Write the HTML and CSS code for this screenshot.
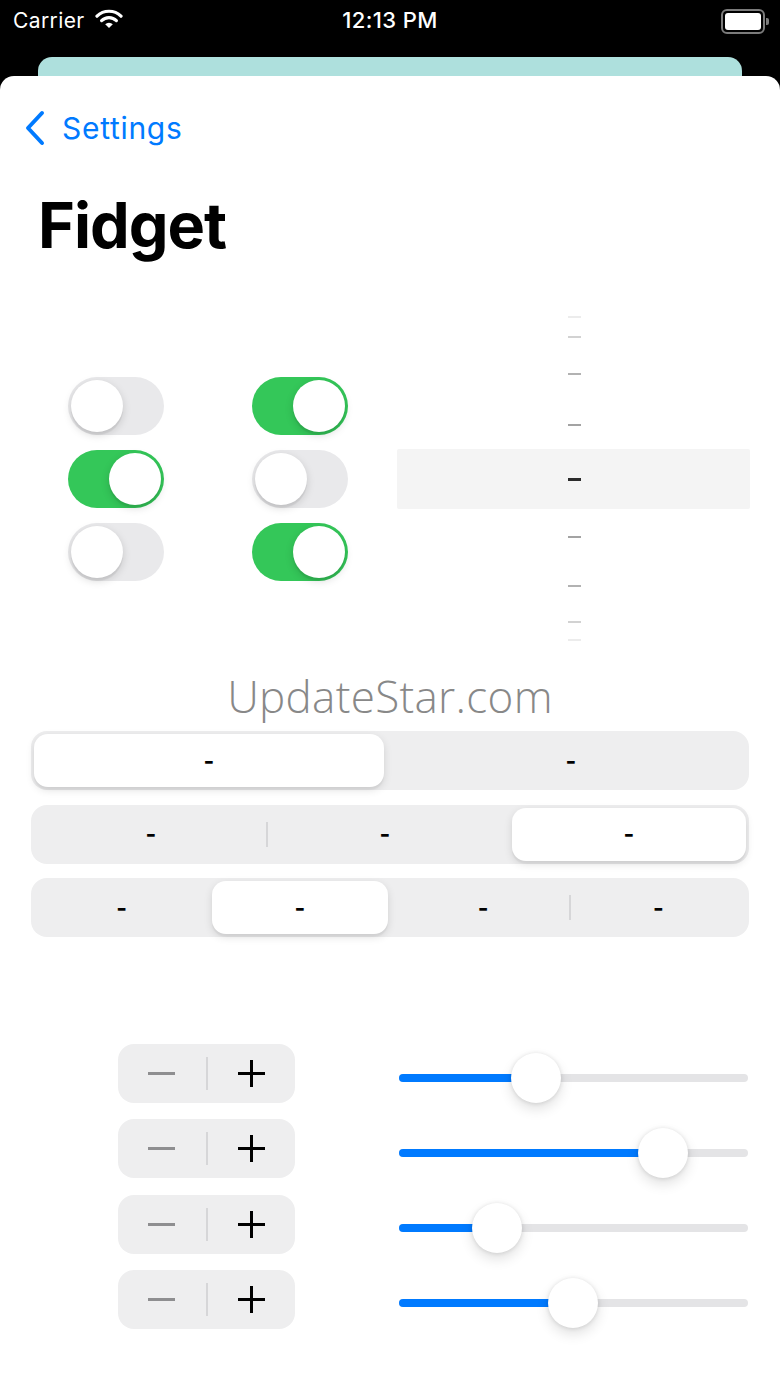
FILE: index.html
```html
<!DOCTYPE html>
<html lang="en">
<head>
    <meta charset="UTF-8">
    <meta name="viewport" content="width=device-width, initial-scale=1.0">
    <title>Fidget</title>
    <link rel="stylesheet" href="styles.css">
</head>
<body>
    <div class="status-bar">
        <div class="carrier">
            Carrier
            <svg class="wifi" width="28" height="20" viewBox="0 0 28 20">
                <path d="M2 7.2 A17 17 0 0 1 26 7.2" fill="none" stroke="#fff" stroke-width="3.2" stroke-linecap="round"/>
                <path d="M6.6 11.6 A10.5 10.5 0 0 1 21.4 11.6" fill="none" stroke="#fff" stroke-width="3.2" stroke-linecap="round"/>
                <path d="M14 19 L10.2 15.3 A5.4 5.4 0 0 1 17.8 15.3 Z" fill="#fff"/>
            </svg>
        </div>
        <div class="clock">12:13 PM</div>
        <div class="battery">
            <div class="battery-body"><div class="battery-level"></div></div>
            <div class="battery-nub"></div>
        </div>
    </div>

    <div class="peek-card"></div>

    <div class="sheet">
        <div class="nav">
            <svg class="chevron" width="22" height="36" viewBox="0 0 22 36">
                <path d="M18 3 L4 18 L18 33" fill="none" stroke="#007aff" stroke-width="4" stroke-linecap="round" stroke-linejoin="round"/>
            </svg>
            <span class="back-label">Settings</span>
        </div>

        <h1 class="title">Fidget</h1>

        <div class="fidget">
            <div class="toggles">
                <div class="toggle"><div class="knob"></div></div>
                <div class="toggle on"><div class="knob"></div></div>
                <div class="toggle on"><div class="knob"></div></div>
                <div class="toggle"><div class="knob"></div></div>
                <div class="toggle"><div class="knob"></div></div>
                <div class="toggle on"><div class="knob"></div></div>
            </div>

            <div class="picker">
                <div class="pick-row r1"><span class="dash"></span></div>
                <div class="pick-row r2"><span class="dash"></span></div>
                <div class="pick-row r3"><span class="dash"></span></div>
                <div class="pick-row r4"><span class="dash"></span></div>
                <div class="pick-row selected"><span class="dash"></span></div>
                <div class="pick-row r6"><span class="dash"></span></div>
                <div class="pick-row r7"><span class="dash"></span></div>
                <div class="pick-row r8"><span class="dash"></span></div>
                <div class="pick-row r9"><span class="dash"></span></div>
            </div>
        </div>

        <div class="watermark">UpdateStar.com</div>

        <div class="segments">
            <div class="segmented two">
                <div class="segment active">-</div>
                <div class="segment">-</div>
            </div>
            <div class="segmented three">
                <div class="segment">-</div>
                <div class="segment divider">-</div>
                <div class="segment active">-</div>
            </div>
            <div class="segmented four">
                <div class="segment">-</div>
                <div class="segment active">-</div>
                <div class="segment">-</div>
                <div class="segment divider">-</div>
            </div>
        </div>

        <div class="controls">
            <div class="control-row">
                <div class="stepper">
                    <div class="step minus"><span class="bar"></span></div>
                    <div class="step-sep"></div>
                    <div class="step plus"><span class="bar"></span><span class="bar vertical"></span></div>
                </div>
                <div class="slider"><div class="fill" style="width: 39.3%"><div class="thumb"></div></div></div>
            </div>
            <div class="control-row">
                <div class="stepper">
                    <div class="step minus"><span class="bar"></span></div>
                    <div class="step-sep"></div>
                    <div class="step plus"><span class="bar"></span><span class="bar vertical"></span></div>
                </div>
                <div class="slider"><div class="fill" style="width: 75.6%"><div class="thumb"></div></div></div>
            </div>
            <div class="control-row">
                <div class="stepper">
                    <div class="step minus"><span class="bar"></span></div>
                    <div class="step-sep"></div>
                    <div class="step plus"><span class="bar"></span><span class="bar vertical"></span></div>
                </div>
                <div class="slider"><div class="fill" style="width: 28.1%"><div class="thumb"></div></div></div>
            </div>
            <div class="control-row">
                <div class="stepper">
                    <div class="step minus"><span class="bar"></span></div>
                    <div class="step-sep"></div>
                    <div class="step plus"><span class="bar"></span><span class="bar vertical"></span></div>
                </div>
                <div class="slider"><div class="fill" style="width: 49.9%"><div class="thumb"></div></div></div>
            </div>
        </div>
    </div>
</body>
</html>
```

FILE: styles.css
```css
body {
    margin: 0;
    background-color: #000;
    font-family: Inter, "Liberation Sans", sans-serif;
    width: 780px;
    height: 1387px;
    overflow: hidden;
}

/* status bar */
.status-bar {
    height: 57px;
    display: flex;
    align-items: flex-start;
    justify-content: space-between;
    padding: 0 11px 0 13px;
    color: #fff;
    position: relative;
}
.carrier {
    display: flex;
    align-items: center;
    gap: 10px;
    font-size: 21px;
    letter-spacing: 0.4px;
    height: 40px;
}
.wifi {
    margin-top: -2px;
}
.clock {
    position: absolute;
    left: 0;
    right: 0;
    top: 0;
    height: 40px;
    line-height: 40px;
    text-align: center;
    font-size: 22px;
    font-weight: 500;
    letter-spacing: 0.4px;
}
.battery {
    display: flex;
    align-items: center;
    gap: 1px;
    margin-top: 9px;
}
.battery-body {
    width: 36px;
    height: 17px;
    border: 2px solid #7b7b7b;
    border-radius: 6px;
    padding: 2px;
}
.battery-level {
    height: 100%;
    background-color: #fff;
    border-radius: 3px;
}
.battery-nub {
    width: 3px;
    height: 7px;
    background-color: #7b7b7b;
    border-radius: 0 2px 2px 0;
}

/* card stack */
.peek-card {
    height: 19px;
    margin: 0 38px;
    background-color: #aee0dd;
    border-radius: 14px 14px 0 0;
}
.sheet {
    background-color: #fff;
    border-radius: 14px 14px 0 0;
    height: 1311px;
}

.nav {
    height: 104px;
    display: flex;
    align-items: center;
    padding-left: 24px;
    gap: 16px;
}
.back-label {
    color: #007aff;
    font-size: 30px;
    letter-spacing: 0.7px;
}

.title {
    margin: 7px 0 0 38px;
    font-size: 63px;
    line-height: 76px;
    font-weight: 700;
    letter-spacing: -1px;
}

/* toggles + picker */
.fidget {
    margin-top: 44px;
    display: flex;
    align-items: center;
    height: 336px;
}
.toggles {
    display: grid;
    grid-template-columns: 96px 96px;
    column-gap: 88px;
    row-gap: 15px;
    margin-left: 68px;
    margin-top: 8px;
    width: 280px;
}
.toggle {
    width: 96px;
    height: 58px;
    border-radius: 29px;
    background-color: #e9e9eb;
    padding: 3px;
    box-sizing: border-box;
    display: flex;
}
.toggle.on {
    background-color: #34c759;
    justify-content: flex-end;
}
.knob {
    width: 52px;
    height: 52px;
    border-radius: 50%;
    background-color: #fff;
    box-shadow: 0 3px 8px rgba(0, 0, 0, 0.15), 0 3px 1px rgba(0, 0, 0, 0.06);
}

.picker {
    margin-left: 49px;
    width: 353px;
    display: flex;
    flex-direction: column;
}
.pick-row {
    display: flex;
    align-items: center;
    justify-content: center;
}
.dash {
    width: 13px;
    height: 2px;
    background-color: #a3a3a3;
    margin-left: 1px;
}
.r1 { height: 20px; }
.r1 .dash { background-color: #ececec; }
.r2 { height: 20px; }
.r2 .dash { background-color: #d2d2d2; }
.r3 { height: 54px; }
.r3 .dash { background-color: #b2b2b2; }
.r4 { height: 48px; }
.pick-row.selected {
    height: 60px;
    background-color: #f4f4f4;
    border-radius: 2px;
}
.selected .dash {
    height: 3px;
    background-color: #2b2b2b;
}
.r6 { height: 56px; }
.r7 { height: 42px; }
.r7 .dash { background-color: #b2b2b2; }
.r8 { height: 30px; }
.r8 .dash { background-color: #d2d2d2; }
.r9 { height: 6px; }
.r9 .dash { background-color: #ececec; }

.watermark {
    margin-top: 28px;
    height: 50px;
    line-height: 50px;
    text-align: center;
    font-family: "Open Sans", sans-serif;
    font-size: 44px;
    font-weight: 300;
    color: #888;
    letter-spacing: 0.3px;
}

/* segmented controls */
.segments {
    margin: 10px 31px 0;
    display: flex;
    flex-direction: column;
    gap: 14.5px;
}
.segmented {
    height: 59px;
    background-color: #eeeeef;
    border-radius: 16px;
    padding: 3px;
    box-sizing: border-box;
    display: flex;
}
.segment {
    flex: 1;
    display: flex;
    align-items: center;
    justify-content: center;
    font-size: 23px;
    font-weight: 700;
    color: #000;
    border-radius: 14px;
    position: relative;
}
.segment.active {
    background-color: #fff;
    box-shadow: 0 3px 8px rgba(0, 0, 0, 0.12), 0 3px 1px rgba(0, 0, 0, 0.04);
}
.two .segment.active {
    margin-right: 12px;
}
.three .segment.active {
    margin-left: 10px;
}
.four .segment.active {
    margin: 0 8px 0 3px;
}
.segment.divider::after {
    content: "";
    position: absolute;
    right: 100%;
    top: 14px;
    bottom: 14px;
    width: 2px;
    background-color: #d6d6d8;
}

/* steppers + sliders */
.controls {
    margin-top: 107px;
    display: flex;
    flex-direction: column;
    gap: 16.3px;
}
.control-row {
    display: flex;
    align-items: center;
    height: 59px;
}
.stepper {
    margin-left: 118px;
    width: 177px;
    height: 59px;
    background-color: #eeeeef;
    border-radius: 16px;
    display: flex;
    align-items: center;
}
.step {
    flex: 1;
    height: 100%;
    position: relative;
    display: flex;
    align-items: center;
    justify-content: center;
}
.step .bar {
    position: absolute;
    width: 27px;
    height: 3px;
    background-color: #000;
}
.step .bar.vertical {
    width: 3px;
    height: 27px;
}
.minus .bar {
    background-color: #8e8e90;
}
.step-sep {
    width: 2px;
    height: 33px;
    background-color: #d6d6d8;
}
.slider {
    margin-left: 104px;
    margin-top: 8px;
    width: 349px;
    height: 8px;
    border-radius: 4px;
    background-color: #e4e4e6;
    display: flex;
}
.fill {
    height: 100%;
    background-color: #007aff;
    border-radius: 4px 0 0 4px;
    position: relative;
}
.thumb {
    position: absolute;
    right: -25px;
    top: -21px;
    width: 50px;
    height: 50px;
    border-radius: 50%;
    background-color: #fff;
    box-shadow: 0 6px 13px rgba(0, 0, 0, 0.12), 0 0.5px 4px rgba(0, 0, 0, 0.12);
}
```
